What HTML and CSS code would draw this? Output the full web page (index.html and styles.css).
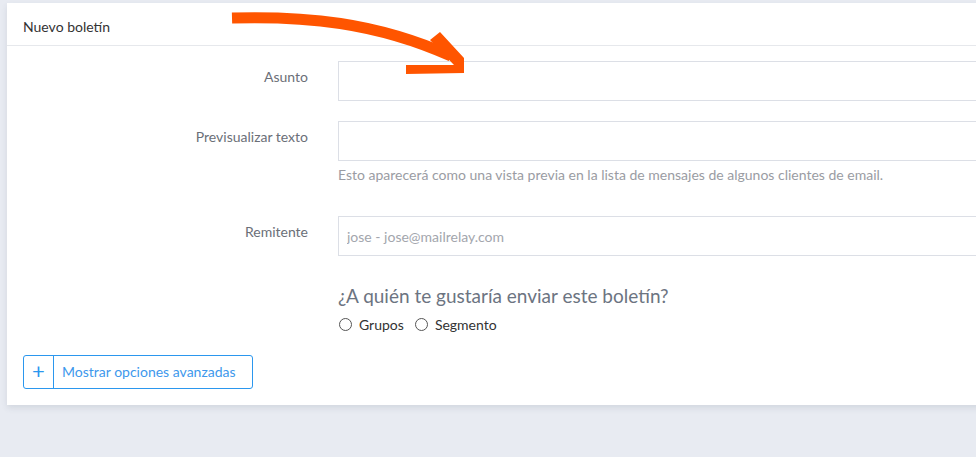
FILE: index.html
```html
<!DOCTYPE html>
<html lang="es">
<head>
  <meta charset="UTF-8" />
  <meta name="viewport" content="width=device-width, initial-scale=1.0"/>
  <title>Nuevo boletín</title>
  <link rel="stylesheet" href="styles.css">
</head>
<body>
  <div class="card">
    <div class="card-header">Nuevo boletín</div>
    <form class="card-body">
      <div class="form-row">
        <label for="subject">Asunto</label>
        <div class="field">
          <input type="text" id="subject" />
        </div>
      </div>

      <div class="form-row">
        <label for="preview">Previsualizar texto</label>
        <div class="field">
          <input type="text" id="preview" />
          <p class="help">Esto aparecerá como una vista previa en la lista de mensajes de algunos clientes de email.</p>
        </div>
      </div>

      <div class="form-row">
        <label for="sender">Remitente</label>
        <div class="field">
          <input type="text" id="sender" placeholder="jose - jose@mailrelay.com" />
        </div>
      </div>

      <div class="form-row">
        <span></span>
        <div class="field">
          <h3 class="question">¿A quién te gustaría enviar este boletín?</h3>
          <div class="radios">
            <label class="radio"><input type="radio" name="target" /> Grupos</label>
            <label class="radio"><input type="radio" name="target" /> Segmento</label>
          </div>
        </div>
      </div>

      <button type="button" class="advanced">
        <span class="plus">+</span>
        <span class="advanced-text">Mostrar opciones avanzadas</span>
      </button>
    </form>

    <!-- hand drawn arrow over the header -->
    <svg class="arrow" width="260" height="90" viewBox="0 0 260 90">
      <path d="M7,18 C80,16 150,22 226,56" fill="none" stroke="#ff5500" stroke-width="11" />
      <polygon points="205,40 215,32 239,58 239,73 181,74 181,65 229,65" fill="#ff5500" />
    </svg>
  </div>
</body>
</html>
```

FILE: styles.css
```css
body {
  background-color: #e8ebf2;
  font-family: 'Lato', 'Open Sans', sans-serif;
  margin: 0;
  padding: 3px 0 0 7px;
  overflow: hidden;
  height: 457px;
  box-sizing: border-box;
}
.card {
  position: relative;
  background-color: #fff;
  margin-right: -40px;
  box-shadow: 0 3px 6px rgba(60, 70, 90, 0.12);
}
.card-header {
  height: 42px;
  line-height: 48px;
  padding-left: 16px;
  font-size: 14px;
  color: #333;
  border-bottom: 1px solid #e6e8ec;
}
.card-body {
  padding: 15px 16px 16px;
}
.form-row {
  display: grid;
  grid-template-columns: 285px 1fr;
  column-gap: 30px;
  margin-bottom: 20px;
}
.form-row > label {
  text-align: right;
  font-size: 14px;
  color: #6b6f78;
  padding-top: 7px;
}
.field input[type="text"] {
  display: block;
  width: 100%;
  height: 40px;
  box-sizing: border-box;
  border: 1px solid #dcdfe6;
  padding: 0 8px;
  font-family: inherit;
  font-size: 14px;
  color: #333;
  outline: none;
}
.field input::placeholder {
  color: #a3a6ad;
}
.help {
  margin: 6px 0 13px;
  font-size: 14px;
  line-height: 16px;
  color: #9a9ca3;
}
.question {
  margin: 8px 0 9px;
  font-size: 19px;
  line-height: 23px;
  font-weight: normal;
  color: #6c7481;
}
.radios {
  display: flex;
  gap: 10px;
  line-height: 17px;
}
.radio {
  display: flex;
  align-items: center;
  gap: 7px;
  font-size: 14px;
  color: #333;
}
.radio input {
  appearance: none;
  width: 13px;
  height: 13px;
  margin: 0 0 0 1px;
  border: 1px solid #555;
  border-radius: 50%;
}
.advanced {
  display: flex;
  align-items: stretch;
  height: 34px;
  padding: 0;
  margin-top: 22px;
  background: #fff;
  border: 1px solid #2b97ee;
  border-radius: 3px;
  font-family: inherit;
  cursor: pointer;
}
.plus {
  width: 29px;
  border-right: 1px solid #2b97ee;
  color: #2b97ee;
  font-size: 22px;
  line-height: 30px;
}
.advanced-text {
  padding: 0 16px 0 8px;
  line-height: 32px;
  font-size: 14px;
  color: #3d98ec;
}
.arrow {
  position: absolute;
  left: 218px;
  top: -3px;
}
```
